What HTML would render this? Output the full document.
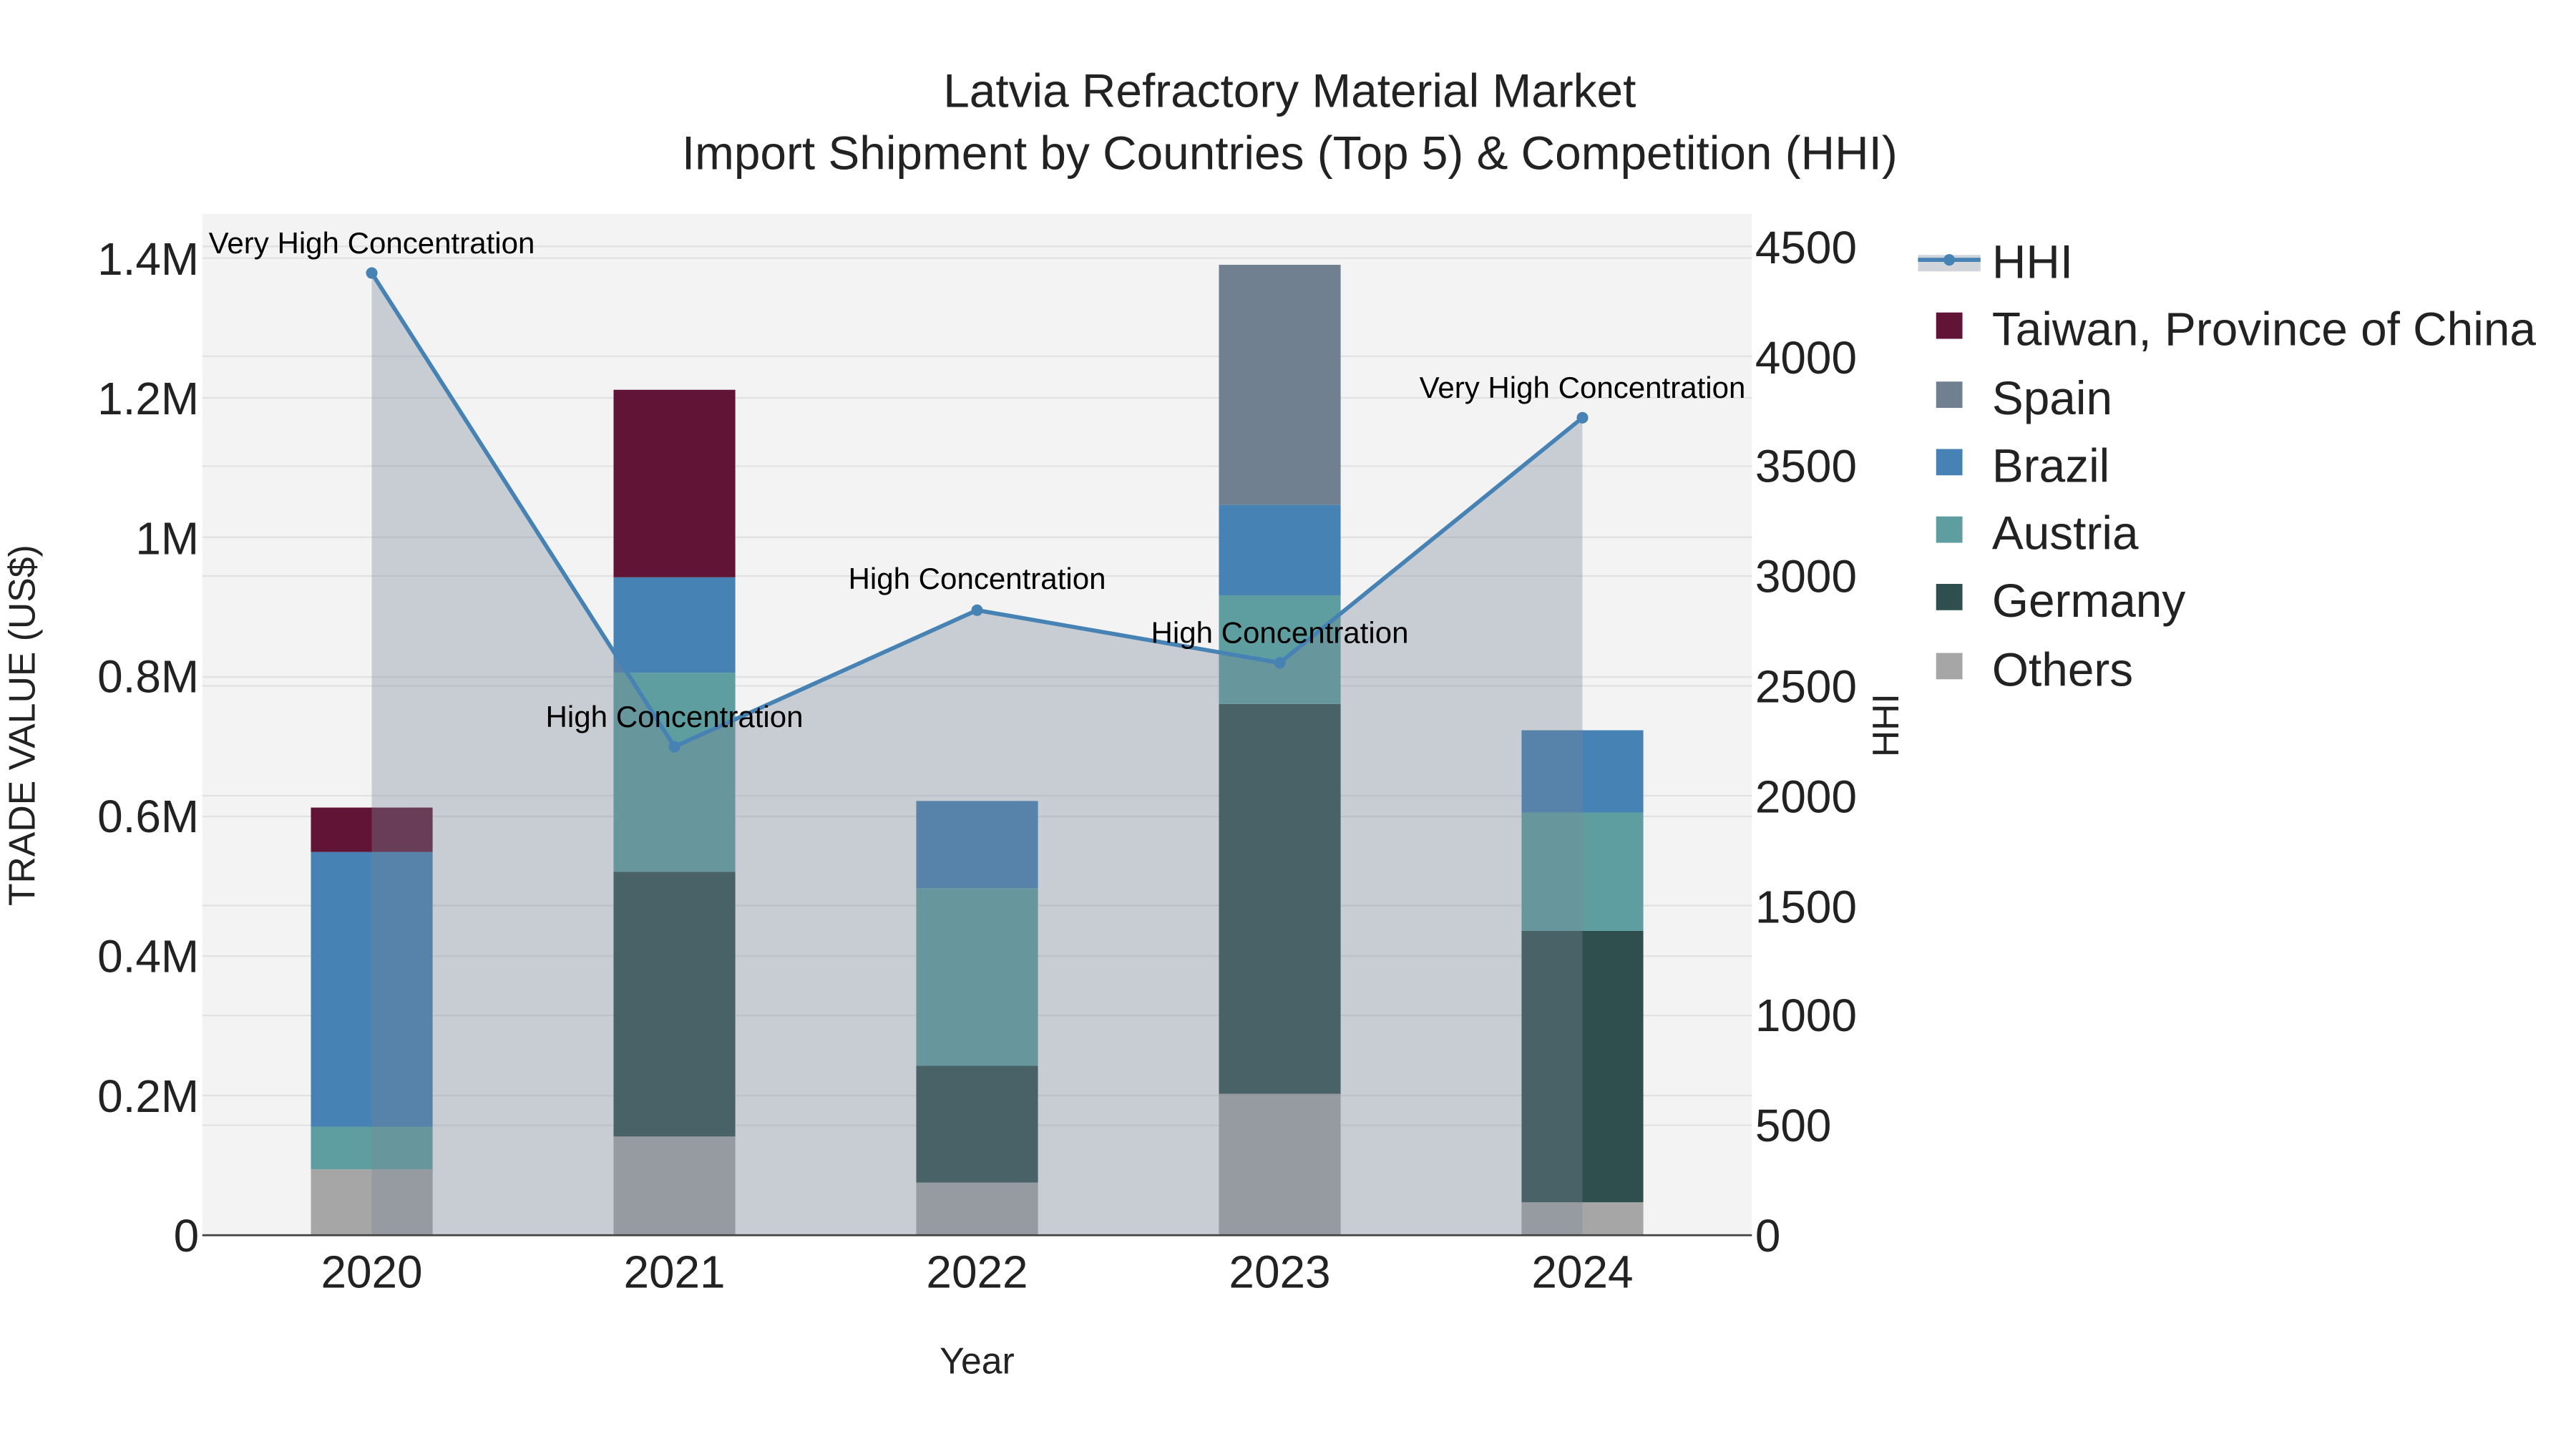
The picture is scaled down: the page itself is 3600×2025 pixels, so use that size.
<!DOCTYPE html>
<html><head><meta charset="utf-8"><style>
html,body{margin:0;padding:0;background:#fff;}
svg{display:block;}
text{font-family:"Liberation Sans",Arial,sans-serif;}
</style></head><body>
<svg width="3600" height="2025" viewBox="0 0 1566 881" preserveAspectRatio="none" xmlns="http://www.w3.org/2000/svg">
<rect width="1566" height="881" fill="#fff"/>
<rect x="123" y="130" width="942" height="621" fill="#f3f3f3"/>
<g stroke="#e2e2e2" stroke-width="1">
<line x1="123" x2="1065" y1="666.1" y2="666.1"/><line x1="123" x2="1065" y1="581.3" y2="581.3"/>
<line x1="123" x2="1065" y1="496.4" y2="496.4"/><line x1="123" x2="1065" y1="411.6" y2="411.6"/>
<line x1="123" x2="1065" y1="326.7" y2="326.7"/><line x1="123" x2="1065" y1="241.9" y2="241.9"/>
<line x1="123" x2="1065" y1="157" y2="157"/>
<line x1="123" x2="1065" y1="684.2" y2="684.2"/><line x1="123" x2="1065" y1="617.4" y2="617.4"/>
<line x1="123" x2="1065" y1="550.6" y2="550.6"/><line x1="123" x2="1065" y1="483.8" y2="483.8"/>
<line x1="123" x2="1065" y1="417" y2="417"/><line x1="123" x2="1065" y1="350.2" y2="350.2"/>
<line x1="123" x2="1065" y1="283.4" y2="283.4"/><line x1="123" x2="1065" y1="216.6" y2="216.6"/>
<line x1="123" x2="1065" y1="149.8" y2="149.8"/>
</g>
<g>
<rect x="189" y="711" width="74" height="40" fill="#a6a6a6"/>
<rect x="189" y="685" width="74" height="26" fill="#5f9ea0"/>
<rect x="189" y="518" width="74" height="167" fill="#4682b4"/>
<rect x="189" y="491" width="74" height="27" fill="#621436"/>

<rect x="373" y="691" width="74" height="60" fill="#a6a6a6"/>
<rect x="373" y="530" width="74" height="161" fill="#2f4f4f"/>
<rect x="373" y="409" width="74" height="121" fill="#5f9ea0"/>
<rect x="373" y="351" width="74" height="58" fill="#4682b4"/>
<rect x="373" y="237" width="74" height="114" fill="#621436"/>

<rect x="557" y="719" width="74" height="32" fill="#a6a6a6"/>
<rect x="557" y="648" width="74" height="71" fill="#2f4f4f"/>
<rect x="557" y="540" width="74" height="108" fill="#5f9ea0"/>
<rect x="557" y="487" width="74" height="53" fill="#4682b4"/>

<rect x="741" y="665" width="74" height="86" fill="#a6a6a6"/>
<rect x="741" y="428" width="74" height="237" fill="#2f4f4f"/>
<rect x="741" y="362" width="74" height="66" fill="#5f9ea0"/>
<rect x="741" y="307" width="74" height="55" fill="#4682b4"/>
<rect x="741" y="161" width="74" height="146" fill="#708090"/>

<rect x="925" y="731" width="74" height="20" fill="#a6a6a6"/>
<rect x="925" y="566" width="74" height="165" fill="#2f4f4f"/>
<rect x="925" y="494" width="74" height="72" fill="#5f9ea0"/>
<rect x="925" y="444" width="74" height="50" fill="#4682b4"/>
</g>
<polygon points="226,166 410,454 594,371 778,403 962,254 962,751 226,751" fill="rgba(119,136,153,0.35)"/>
<polyline points="226,166 410,454 594,371 778,403 962,254" fill="none" stroke="#4682b4" stroke-width="2.5"/>
<g fill="#4682b4"><circle cx="226" cy="166" r="3.5"/><circle cx="410" cy="454" r="3.5"/><circle cx="594" cy="371" r="3.5"/><circle cx="778" cy="403" r="3.5"/><circle cx="962" cy="254" r="3.5"/></g>
<line x1="123" x2="1065" y1="751" y2="751" stroke="#444" stroke-width="1.2"/>
<g font-size="18.3" fill="#000" text-anchor="middle">
<text x="226" y="154">Very High Concentration</text>
<text x="410" y="442">High Concentration</text>
<text x="594" y="358">High Concentration</text>
<text x="778" y="391">High Concentration</text>
<text x="962" y="242">Very High Concentration</text>
</g>
<g font-size="28.6" fill="#222" text-anchor="middle">
<text x="784" y="65">Latvia Refractory Material Market</text>
<text x="784" y="103">Import Shipment by Countries (Top 5) &amp; Competition (HHI)</text>
</g>
<g font-size="27.8" fill="#222" text-anchor="end">
<text x="121" y="761">0</text><text x="121" y="676">0.2M</text><text x="121" y="591">0.4M</text>
<text x="121" y="506">0.6M</text><text x="121" y="421">0.8M</text><text x="121" y="337">1M</text>
<text x="121" y="252">1.2M</text><text x="121" y="167">1.4M</text>
</g>
<g font-size="27.8" fill="#222" text-anchor="start">
<text x="1067" y="761">0</text><text x="1067" y="694">500</text><text x="1067" y="627">1000</text>
<text x="1067" y="561">1500</text><text x="1067" y="494">2000</text><text x="1067" y="427">2500</text>
<text x="1067" y="360">3000</text><text x="1067" y="293">3500</text><text x="1067" y="227">4000</text>
<text x="1067" y="160">4500</text>
</g>
<g font-size="27.8" fill="#222" text-anchor="middle">
<text x="226" y="783">2020</text><text x="410" y="783">2021</text><text x="594" y="783">2022</text>
<text x="778" y="783">2023</text><text x="962" y="783">2024</text>
</g>
<text x="594" y="835" font-size="22.5" fill="#222" text-anchor="middle">Year</text>
<text transform="translate(21,441) rotate(-90)" font-size="22.5" fill="#222" text-anchor="middle">TRADE VALUE (US$)</text>
<text transform="translate(1154,441) rotate(-90)" font-size="22.5" fill="#222" text-anchor="middle">HHI</text>
<rect x="1166" y="155" width="38" height="10" fill="rgba(119,136,153,0.35)"/>
<line x1="1166" x2="1204" y1="158" y2="158" stroke="#4682b4" stroke-width="2.5"/>
<circle cx="1185" cy="158" r="3.5" fill="#4682b4"/>
<g font-size="28.6" fill="#222">
<text x="1211" y="169">HHI</text>
<rect x="1177" y="190" width="16" height="16" fill="#621436"/><text x="1211" y="210">Taiwan, Province of China</text>
<rect x="1177" y="232" width="16" height="16" fill="#708090"/><text x="1211" y="252">Spain</text>
<rect x="1177" y="273" width="16" height="16" fill="#4682b4"/><text x="1211" y="293">Brazil</text>
<rect x="1177" y="314" width="16" height="16" fill="#5f9ea0"/><text x="1211" y="334">Austria</text>
<rect x="1177" y="355" width="16" height="16" fill="#2f4f4f"/><text x="1211" y="375">Germany</text>
<rect x="1177" y="397" width="16" height="16" fill="#a6a6a6"/><text x="1211" y="417">Others</text>
</g>
</svg>
</body></html>
